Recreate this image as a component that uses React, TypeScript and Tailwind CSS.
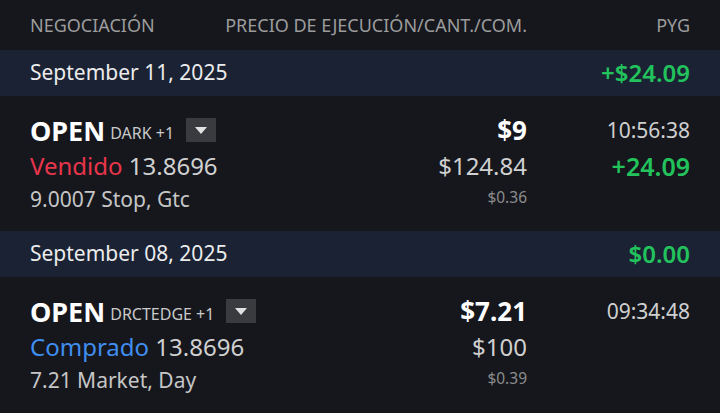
import React from "react";

type Trade = {
  route: string;
  side: "Vendido" | "Comprado";
  qty: string;
  detail: string;
  price: string;
  amount: string;
  fee: string;
  time: string;
  pnl?: string;
};

type Day = {
  date: string;
  total: string;
  trades: Trade[];
};

const days: Day[] = [
  {
    date: "September 11, 2025",
    total: "+$24.09",
    trades: [
      {
        route: "DARK +1",
        side: "Vendido",
        qty: "13.8696",
        detail: "9.0007 Stop, Gtc",
        price: "$9",
        amount: "$124.84",
        fee: "$0.36",
        time: "10:56:38",
        pnl: "+24.09",
      },
    ],
  },
  {
    date: "September 08, 2025",
    total: "$0.00",
    trades: [
      {
        route: "DRCTEDGE +1",
        side: "Comprado",
        qty: "13.8696",
        detail: "7.21 Market, Day",
        price: "$7.21",
        amount: "$100",
        fee: "$0.39",
        time: "09:34:48",
      },
    ],
  },
];

function Caret() {
  return (
    <span className="ml-[12px] flex h-[24px] w-[30px] items-center justify-center bg-[#3a3b3e]">
      <svg width="12" height="7" viewBox="0 0 12 7">
        <path d="M0 0h12L6 7z" fill="#e2e2e2" />
      </svg>
    </span>
  );
}

function TradeRow({ t }: { t: Trade }) {
  return (
    <div className="flex px-[30px] pt-[16px] pb-[18px]">
      <div className="flex-1">
        <div className="flex items-center h-[36px]">
          <span className="text-[27px] font-bold leading-none text-white">OPEN</span>
          <span className="ml-[5px] mt-[5px] text-[16px] leading-none text-[#c9c9c9]">{t.route}</span>
          <Caret />
        </div>
        <div className="mt-[2px] text-[24px] leading-[32px]">
          <span className={t.side === "Vendido" ? "text-[#e9354b]" : "text-[#3f8ef0]"}>{t.side}</span>
          <span className="text-[#d0d0d0]"> {t.qty}</span>
        </div>
        <div className="mt-[3px] text-[21px] leading-[28px] text-[#c6c6c6]">{t.detail}</div>
      </div>
      <div className="w-[200px] text-right">
        <div className="h-[36px] flex items-center justify-end text-[26px] font-bold leading-none text-white">
          {t.price}
        </div>
        <div className="mt-[2px] text-[24px] leading-[32px] text-[#d0d0d0]">{t.amount}</div>
        <div className="mt-[3px] text-[15.5px] leading-[24px] text-[#8c8c8c]">{t.fee}</div>
      </div>
      <div className="w-[163px] text-right">
        <div className="h-[36px] flex items-center justify-end text-[21px] leading-none text-[#cfcfcf]">
          {t.time}
        </div>
        {t.pnl && (
          <div className="mt-[2px] text-[25px] font-semibold leading-[32px] text-[#22c35c]">{t.pnl}</div>
        )}
      </div>
    </div>
  );
}

export default function App() {
  return (
    <main
      className="h-[413px] w-[720px] overflow-hidden bg-[#15171d]"
      style={{ fontFamily: '"Noto Sans", "Liberation Sans", sans-serif' }}
    >
      <div className="flex h-[50px] items-center px-[30px] text-[18px] text-[#9c9c9c]">
        <div className="flex-1">NEGOCIACIÓN</div>
        <div className="text-right">PRECIO DE EJECUCIÓN/CANT./COM.</div>
        <div className="w-[163px] text-right">PYG</div>
      </div>
      {days.map((d) => (
        <section key={d.date}>
          <div className="flex h-[46px] items-center justify-between bg-[#1a2233] px-[30px]">
            <span className="text-[21px] text-[#ececec]">{d.date}</span>
            <span className="text-[24px] font-semibold text-[#22c35c]">{d.total}</span>
          </div>
          {d.trades.map((t) => (
            <TradeRow key={t.time} t={t} />
          ))}
        </section>
      ))}
    </main>
  );
}
